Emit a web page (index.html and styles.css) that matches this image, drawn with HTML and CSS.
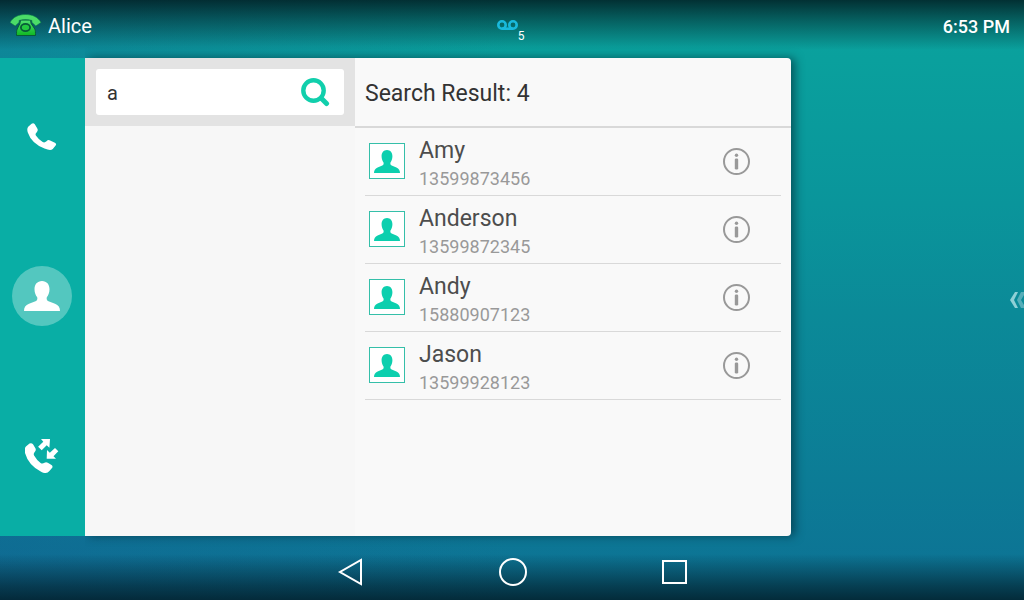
FILE: index.html
```html
<!DOCTYPE html>
<html lang="en">
<head>
<meta charset="utf-8">
<meta name="viewport" content="width=device-width, initial-scale=1">
<title>Contacts</title>
<link rel="stylesheet" href="styles.css">
</head>
<body>
<svg class="symbols" aria-hidden="true">
  <symbol id="person" viewBox="0 0 36 30"><path d="M18 0c-4.800 0-7.500 3.600-7.500 8.200 0 3.400 1.200 6 2.700 8 .5 2.200-.2 3.300-1.700 4L5 22.800C1.500 24.400 0 26.300 0 30h36c0-3.700-1.500-5.600-5-7.200l-6.500-2.600c-1.500-.7-2.200-1.800-1.700-4 1.500-2 2.700-4.600 2.700-8C25.500 3.600 22.800 0 18 0z"/></symbol>
  <symbol id="info" viewBox="0 0 28 28"><circle cx="13.500" cy="14.500" r="12.500" fill="none" stroke="currentColor" stroke-width="2"/><circle cx="13.500" cy="8.300" r="1.700"/><rect x="11.800" y="11.500" width="3.400" height="11" rx="1.300"/></symbol>
</svg>

<header class="status-bar">
  <div class="account">
    <svg class="account-icon" viewBox="0 0 32 24" aria-hidden="true">
      <defs><linearGradient id="green" x1="0" y1="0" x2="0" y2="1"><stop offset="0" stop-color="#4fe070"/><stop offset="1" stop-color="#0fb822"/></linearGradient></defs>
      <path d="M10.500 6h10l.6 3.500 3.700 5.500c.7 1.500.7 3.500.7 6.500h-19c0-3 0-5 .7-6.500l2.700-5.500z" fill="url(#green)" stroke="#075c38"/>
      <ellipse cx="15.500" cy="13.500" rx="4.600" ry="3.700" fill="#22c840" stroke="#075c38" stroke-width="1.800"/>
      <path d="M0 8.500C3 3 8.500.5 15.500.5S28 3 31 8.500L25.800 12l-4-3.700.2-1.800c-4-1.200-9-1.200-13 0l.2 1.800-4 3.700z" fill="#4bdc68" stroke="#08764a" stroke-width=".6"/>
    </svg>
    <span>Alice</span>
  </div>
  <div class="voicemail" role="img" aria-label="Voicemail messages">
    <svg class="voicemail-icon" viewBox="0 0 22 10" fill="none" stroke="#19b9dc" stroke-width="2.600"><circle cx="6" cy="5" r="3.700"/><circle cx="17" cy="5" r="3.700"/><path d="M6 8.700h11"/></svg>
    <span class="voicemail-count">5</span>
  </div>
  <time class="clock">6:53 PM</time>
</header>

<main class="workspace">
  <nav class="sidebar" aria-label="Phone">
    <button class="side-button" aria-label="Dial">
      <svg width="30" height="28" viewBox="0 0 30 28" fill="#fff"><path d="M1.200 3.800 4.600.8Q6.400-.4 7.800 1.300l2.500 4.200q1.100 2-.5 3.700-1.900 1.600-.9 3.400 2.600 4 6.800 6.500 2 1 3.800-.8 1.500-1.800 3.600-.9l4.800 2.300q2 1 .7 2.900l-2.800 3.400Q23.500 28 17.500 25.500 4.500 20.500.8 9.500-.4 5.500 1.200 3.800z"/></svg>
    </button>
    <button class="side-button side-button-active" aria-label="Contacts" aria-current="page">
      <svg width="36" height="30" fill="#fff"><use href="#person"/></svg>
    </button>
    <button class="side-button" aria-label="Call history">
      <svg width="34" height="36" viewBox="0 0 34 36" fill="#fff"><path d="M1.200 9.300 4.500 6.500Q6.500 5.500 8 7.200l2.400 4q1 2-.5 3.600-1.800 1.700-.8 3.700 2.500 4.500 6.500 7.500 1.900 1.200 3.900-.3 1.500-1 3.300 0l3.700 2.200q1.800 1.400.5 3.100l-2.600 2.900Q21.500 37.500 16.500 35 3.500 28.500 0 16-1.200 11.500 1.200 9.300z"/><path d="M16 2h9l-.6 8.800-2.700-2.500-5 5-3.600-3.600 5.200-5z"/><path d="m30 11 3.300 3.300-4.800 5 2.500 2.500h-9.300l.3-8.800 2.800 2.700z"/></svg>
    </button>
  </nav>

  <div class="panel">
    <section class="groups">
      <form class="search-strip" role="search">
        <div class="search-box">
          <input class="search-input" type="text" value="a" aria-label="Search contacts">
          <button class="search-button" type="button" aria-label="Search">
            <svg width="30" height="30" viewBox="0 0 30 30" fill="none" stroke="#11cfac"><circle cx="13.500" cy="13.500" r="10.200" stroke-width="4.400"/><path d="m21.500 21.500 5 5" stroke-width="5" stroke-linecap="round"/></svg>
          </button>
        </div>
      </form>
    </section>
    <section class="results">
      <h1 class="results-title">Search Result: 4</h1>
      <ul class="contact-list">
        <li class="contact">
          <span class="avatar"><svg width="26" height="23" viewBox="0 0 36 30" preserveAspectRatio="none"><use href="#person" width="36" height="30"/></svg></span>
          <div class="contact-text"><div class="contact-name">Amy</div><div class="contact-number">13599873456</div></div>
          <button class="info-button" aria-label="Details for Amy"><svg width="28" height="28"><use href="#info"/></svg></button>
        </li>
        <li class="contact">
          <span class="avatar"><svg width="26" height="23" viewBox="0 0 36 30" preserveAspectRatio="none"><use href="#person" width="36" height="30"/></svg></span>
          <div class="contact-text"><div class="contact-name">Anderson</div><div class="contact-number">13599872345</div></div>
          <button class="info-button" aria-label="Details for Anderson"><svg width="28" height="28"><use href="#info"/></svg></button>
        </li>
        <li class="contact">
          <span class="avatar"><svg width="26" height="23" viewBox="0 0 36 30" preserveAspectRatio="none"><use href="#person" width="36" height="30"/></svg></span>
          <div class="contact-text"><div class="contact-name">Andy</div><div class="contact-number">15880907123</div></div>
          <button class="info-button" aria-label="Details for Andy"><svg width="28" height="28"><use href="#info"/></svg></button>
        </li>
        <li class="contact">
          <span class="avatar"><svg width="26" height="23" viewBox="0 0 36 30" preserveAspectRatio="none"><use href="#person" width="36" height="30"/></svg></span>
          <div class="contact-text"><div class="contact-name">Jason</div><div class="contact-number">13599928123</div></div>
          <button class="info-button" aria-label="Details for Jason"><svg width="28" height="28"><use href="#info"/></svg></button>
        </li>
      </ul>
    </section>
  </div>

  <aside class="drawer">
    <button class="drawer-button" aria-label="Open drawer">
      <svg width="15" height="18" viewBox="0 0 15 18"><path d="M6 1h3L5 9l4 8H6L1 9z" fill="#8fd0d6"/><path d="M12 1h3v3l-3 5 3 5v3h-3L8 9z" fill="#55aeb9"/></svg>
    </button>
  </aside>
</main>

<nav class="system-bar" aria-label="System">
  <button class="system-button" aria-label="Back"><svg width="28" height="30" viewBox="0 0 28 30"><path d="M25 3v24L4 15z"/></svg></button>
  <button class="system-button" aria-label="Home"><svg width="30" height="30" viewBox="0 0 30 30"><circle cx="16" cy="15" r="13"/></svg></button>
  <button class="system-button" aria-label="Recent apps"><svg width="28" height="30" viewBox="0 0 28 30"><rect x="3" y="4" width="23" height="22"/></svg></button>
</nav>
</body>
</html>
```

FILE: styles.css
```css
* {
  box-sizing: border-box;
}

body {
  display: flex;
  flex-direction: column;
  min-height: 100vh;
  margin: 0;
  font-family: Roboto, "Liberation Sans", sans-serif;
  background:
    linear-gradient(to bottom, rgba(0, 20, 25, 0.8), rgba(0, 20, 25, 0.5) 18px, rgba(0, 20, 25, 0) 50px),
    linear-gradient(to top, rgba(0, 20, 28, 0.75), rgba(0, 20, 28, 0.55) 14px, rgba(0, 20, 28, 0) 46px),
    linear-gradient(to right, rgba(18, 95, 145, 0.4), rgba(18, 95, 145, 0) 50%),
    linear-gradient(to bottom, #0aa39e, #0aa09d 10%, #0a959b 34%, #0b8a98 52%, #0c7c96 80%, #0d7194);
}

button {
  display: flex;
  align-items: center;
  justify-content: center;
  padding: 0;
  border: 0;
  background: none;
  cursor: pointer;
}

.symbols {
  position: absolute;
  width: 0;
  height: 0;
}

.status-bar {
  display: grid;
  grid-template-columns: 1fr auto 1fr;
  align-items: center;
  height: 58px;
  padding: 0 14px 6px 10px;
  color: #fff;
}

.account {
  display: flex;
  align-items: center;
  gap: 6px;
  font-size: 20px;
}

.account-icon {
  width: 32px;
  height: 24px;
}

.voicemail {
  display: flex;
  padding-top: 12px;
}

.voicemail-icon {
  width: 22px;
  height: 10px;
}

.voicemail-count {
  padding-top: 8px;
  font-size: 12px;
  line-height: 16px;
}

.clock {
  justify-self: end;
  font-size: 18px;
  font-weight: 500;
}

.workspace {
  display: grid;
  grid-template-columns: 85px minmax(0, 706fr) minmax(0, 233fr);
  flex: 1;
}

.sidebar {
  display: flex;
  flex-direction: column;
  align-items: center;
  justify-content: space-around;
  padding: 0 1px 2px 0;
  background: #09aea5;
}

.side-button {
  width: 60px;
  height: 60px;
  border-radius: 50%;
}

.side-button-active {
  background: #53c7bf;
}

.panel {
  display: grid;
  grid-template-columns: 270px minmax(0, 1fr);
  border-radius: 0 4px 4px 0;
  background: #f9f9f9;
  box-shadow: 4px 0 10px rgba(0, 40, 50, 0.6);
  clip-path: inset(-16px -20px -16px 0);
}

.groups {
  background: #f7f7f7;
}

.search-strip {
  padding: 11px;
  background: #e3e3e3;
}

.search-box {
  display: flex;
  align-items: center;
  height: 46px;
  padding: 0 14px 0 11px;
  border-radius: 3px;
  background: #fff;
}

.search-input {
  flex: 1;
  min-width: 0;
  padding: 2px 0 0;
  border: 0;
  outline: 0;
  background: none;
  color: #333;
  font: 20px/24px Roboto, "Liberation Sans", sans-serif;
}

.results-title {
  margin: 0;
  padding: 4px 10px 0;
  border-bottom: 2px solid #d9d9d9;
  color: #333;
  font-size: 23px;
  font-weight: 400;
  line-height: 64px;
}

.contact-list {
  margin: 0;
  padding: 0 10px;
  list-style: none;
}

.contact {
  display: flex;
  align-items: center;
  gap: 14px;
  height: 68px;
  padding: 0 30px 1px 4px;
  border-bottom: 1px solid #d9d9d9;
}

.avatar {
  display: flex;
  align-items: center;
  justify-content: center;
  width: 36px;
  height: 36px;
  border: 1px solid #35bfa9;
  background: #fff;
  fill: #0ccfae;
}

.contact-text {
  flex: 1;
  padding-top: 4px;
}

.contact-name {
  color: #4d4d4d;
  font-size: 23px;
  line-height: 32px;
}

.contact-number {
  color: #999;
  font-size: 18px;
  line-height: 24px;
}

.info-button {
  color: #999;
  fill: #999;
}

.drawer {
  display: flex;
  align-items: center;
  justify-content: flex-end;
  padding-top: 6px;
}

.system-bar {
  display: flex;
  align-items: center;
  justify-content: center;
  gap: 114px;
  height: 64px;
  padding-top: 8px;
}

.system-button {
  width: 48px;
  height: 48px;
  fill: none;
  stroke: #fff;
  stroke-width: 2;
}
```
